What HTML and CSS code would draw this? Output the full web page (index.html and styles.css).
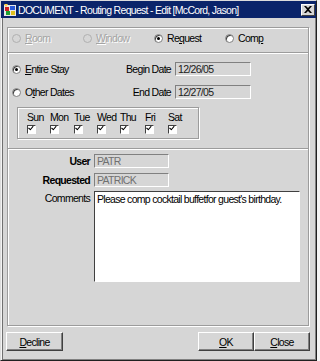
FILE: index.html
```html
<!DOCTYPE html>
<html lang="en">
<head>
    <meta charset="UTF-8">
    <title>DOCUMENT - Routing Request - Edit</title>
    <link rel="stylesheet" href="styles.css">
</head>
<body>
    <div class="window">
        <div class="titlebar">
            <svg class="app-icon" width="14" height="14" viewBox="0 0 14 14">
                <rect x="1" y="2" width="12" height="11" fill="#e8e8e8"/>
                <rect x="2" y="4" width="4" height="4" fill="#d02020"/>
                <rect x="7" y="3" width="5" height="4" fill="#2a5ad8"/>
                <rect x="3" y="8" width="4" height="4" fill="#20a030"/>
                <rect x="8" y="8" width="4" height="4" fill="#e0c020"/>
                <path d="M1 1 L5 1 L3 4 Z" fill="#ffd040"/>
            </svg>
            <span class="title-text">DOCUMENT - Routing Request - Edit [McCord, Jason]</span>
            <div class="title-close">
                <svg width="8" height="7" viewBox="0 0 8 7">
                    <path d="M0 0 L2 0 L4 2 L6 0 L8 0 L5 3.5 L8 7 L6 7 L4 5 L2 7 L0 7 L3 3.5 Z" fill="#000"/>
                </svg>
            </div>
        </div>

        <div class="body">
            <div class="panel">
                <div class="section type-section">
                    <label class="radio disabled"><span class="dot"></span><span><u>R</u>oom</span></label>
                    <label class="radio disabled"><span class="dot"></span><span><u>W</u>indow</span></label>
                    <label class="radio"><span class="dot on"></span><span>Re<u>q</u>uest</span></label>
                    <label class="radio"><span class="dot"></span><span>Com<u>p</u></span></label>
                </div>

                <div class="section date-section">
                    <div class="date-row">
                        <label class="radio stay"><span class="dot on"></span><span><u>E</u>ntire Stay</span></label>
                        <span class="field-label">Begin Date</span>
                        <span class="field">12/26/05</span>
                    </div>
                    <div class="date-row">
                        <label class="radio stay"><span class="dot"></span><span>O<u>t</u>her Dates</span></label>
                        <span class="field-label">End Date</span>
                        <span class="field">12/27/05</span>
                    </div>
                    <div class="days">
                        <div class="day"><span>Sun</span><span class="check"></span></div>
                        <div class="day"><span>Mon</span><span class="check"></span></div>
                        <div class="day"><span>Tue</span><span class="check"></span></div>
                        <div class="day"><span>Wed</span><span class="check"></span></div>
                        <div class="day"><span>Thu</span><span class="check"></span></div>
                        <div class="day"><span>Fri</span><span class="check"></span></div>
                        <div class="day"><span>Sat</span><span class="check"></span></div>
                    </div>
                </div>

                <div class="section user-section">
                    <div class="user-row">
                        <span class="user-label bold">User</span>
                        <span class="field short">PATR</span>
                    </div>
                    <div class="user-row">
                        <span class="user-label bold">Requested</span>
                        <span class="field short">PATRICK</span>
                    </div>
                    <div class="user-row comments">
                        <span class="user-label">Comments</span>
                        <div class="textarea">Please comp cocktail buffetfor guest's birthday.</div>
                    </div>
                </div>
            </div>

            <div class="buttons">
                <button class="btn"><u>D</u>ecline</button>
                <div class="right-buttons">
                    <button class="btn"><u>O</u>K</button>
                    <button class="btn"><u>C</u>lose</button>
                </div>
            </div>
        </div>
    </div>
    <div class="backdrop"></div>
</body>
</html>
```

FILE: styles.css
```css
body {
    margin: 0;
    width: 320px;
    height: 361px;
    overflow: hidden;
    display: flex;
    background: #ffffff;
    font-family: "Liberation Sans", Arial, sans-serif;
    font-size: 10.5px;
    letter-spacing: -0.7px;
    color: #000000;
}

.window {
    width: 317px;
    height: 361px;
    box-sizing: border-box;
    background: #d6d6d6;
    border: 1px solid;
    border-color: #dcdcdc #202020 #202020 #dcdcdc;
    display: flex;
    flex-direction: column;
}

.backdrop {
    flex: 1;
    background: #f4f4f4;
}

.titlebar {
    height: 17px;
    flex: none;
    background: #0a246a;
    color: #ffffff;
    display: flex;
    align-items: center;
}

.app-icon {
    margin: 0 1px 0 2px;
}

.title-text {
    flex: 1;
    white-space: nowrap;
}

.title-close {
    width: 14px;
    height: 12px;
    margin-right: 1px;
    background: #d6d6d6;
    border: 1px solid;
    border-color: #ffffff #404040 #404040 #ffffff;
    box-sizing: border-box;
    display: flex;
    align-items: center;
    justify-content: center;
}

.body {
    flex: 1;
    padding: 9px 7px 0 5px;
    border-left: 1px solid #f4f4f4;
    box-shadow: inset 1px 0 0 #707070, inset -1px -1px 0 #808080;
    display: flex;
    flex-direction: column;
}

.panel {
    border: 1px solid #9c9c9c;
    box-shadow: inset 1px 1px 0 #ffffff, 1px 1px 0 #ffffff;
}

.section + .section {
    border-top: 1px solid #9c9c9c;
    box-shadow: inset 0 1px 0 #ffffff;
}

.type-section {
    height: 24px;
    box-sizing: border-box;
    padding: 0 0 4px 4px;
    display: flex;
    align-items: center;
}

.radio {
    display: flex;
    align-items: center;
    gap: 4px;
    white-space: nowrap;
}

.type-section .radio {
    width: 71px;
}

.radio.disabled {
    color: #a4a4a4;
    text-shadow: 1px 1px 0 #ffffff;
}

.dot {
    width: 9px;
    height: 9px;
    flex: none;
    border-radius: 50%;
    background: #ffffff;
    border: 1px solid #808080;
    box-sizing: border-box;
    box-shadow: inset 1px 1px 0 #404040;
    position: relative;
}

.radio.disabled .dot {
    background: #d6d6d6;
    border-color: #b0b0b0;
    box-shadow: none;
}

.dot.on::after {
    content: "";
    position: absolute;
    left: 2px;
    top: 2px;
    width: 3px;
    height: 3px;
    border-radius: 50%;
    background: #000000;
}

.date-section {
    height: 96px;
    box-sizing: border-box;
    padding: 9px 0 0 4px;
    display: flex;
    flex-direction: column;
}

.date-row {
    display: flex;
    align-items: center;
    height: 14px;
    margin-bottom: 9px;
}

.date-row + .date-row {
    margin-bottom: 8px;
}

.radio.stay {
    width: 101px;
}

.field-label {
    width: 58px;
    text-align: right;
    margin-right: 4px;
    white-space: nowrap;
}

.field {
    width: 76px;
    height: 14px;
    box-sizing: border-box;
    border: 1px solid;
    border-color: #808080 #ffffff #ffffff #808080;
    padding-left: 2px;
    line-height: 12px;
    color: #202020;
    background: #d6d6d6;
}

.days {
    margin: 0 0 0 5px;
    width: 182px;
    height: 32px;
    box-sizing: border-box;
    border: 1px solid #9c9c9c;
    box-shadow: inset 1px 1px 0 #ffffff, 1px 1px 0 #ffffff;
    display: flex;
    padding: 3px 0 0 9px;
}

.day {
    display: flex;
    flex-direction: column;
    align-items: flex-start;
    gap: 2px;
    width: 23px;
}

.day:nth-child(2) { width: 24px; }
.day:nth-child(5) { width: 25px; }

.check {
    width: 9px;
    height: 9px;
    box-sizing: border-box;
    border: 1px solid;
    border-color: #404040 #ffffff #ffffff #404040;
    background: #ffffff;
    position: relative;
}

.check::after {
    content: "";
    position: absolute;
    left: 1px;
    top: -1px;
    width: 2px;
    height: 4px;
    border: solid #000000;
    border-width: 0 1.5px 1.5px 0;
    transform: rotate(40deg);
    transform-origin: 60% 60%;
}

.user-section {
    height: 177px;
    box-sizing: border-box;
    padding: 5px 0 0 0;
    display: flex;
    flex-direction: column;
}

.user-row {
    display: flex;
    align-items: center;
    margin-bottom: 5px;
}

.user-row + .user-row {
    margin-bottom: 4px;
}

.user-label {
    width: 82px;
    text-align: right;
    margin-right: 4px;
}

.bold {
    font-weight: bold;
}

.field.short {
    width: 75px;
    color: #707070;
}

.user-row.comments {
    align-items: flex-start;
}

.user-row.comments .user-label {
    margin-top: 1px;
}

.textarea {
    width: 206px;
    height: 91px;
    box-sizing: border-box;
    background: #ffffff;
    border: 1px solid;
    border-color: #404040 #ffffff #ffffff #404040;
    padding: 1px 2px;
}

.buttons {
    display: flex;
    justify-content: space-between;
    margin: 6px -1px 0 -1px;
}

.right-buttons {
    display: flex;
}

.btn {
    width: 57px;
    height: 19px;
    padding: 0;
    font: inherit;
    letter-spacing: inherit;
    color: #000000;
    background: #d6d6d6;
    border: 1px solid;
    border-color: #ffffff #404040 #404040 #ffffff;
    box-shadow: inset -1px -1px 0 #808080;
}

.right-buttons .btn {
    width: 56px;
}
```
